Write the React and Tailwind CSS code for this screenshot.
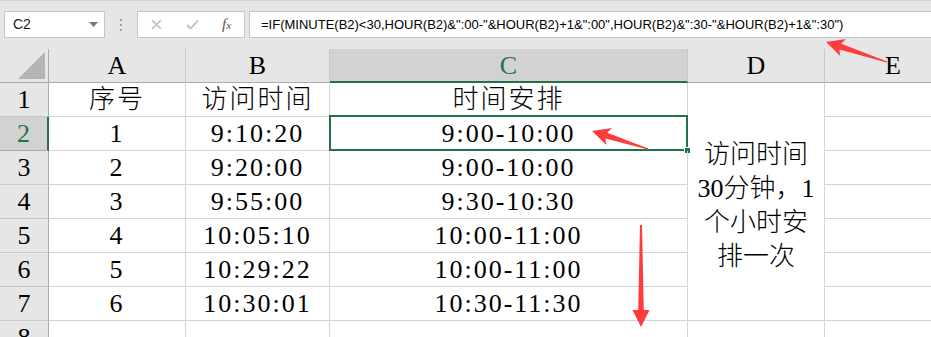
import React from 'react';

const SERIF = { fontFamily: '"Liberation Serif", "Noto Sans CJK SC", serif' };

const rows = [
  { n: 1, a: '序号', b: '访问时间', c: '时间安排' },
  { n: 2, a: '1', b: '9:10:20', c: '9:00-10:00' },
  { n: 3, a: '2', b: '9:20:00', c: '9:00-10:00' },
  { n: 4, a: '3', b: '9:55:00', c: '9:30-10:30' },
  { n: 5, a: '4', b: '10:05:10', c: '10:00-11:00' },
  { n: 6, a: '5', b: '10:29:22', c: '10:00-11:00' },
  { n: 7, a: '6', b: '10:30:01', c: '10:30-11:30' },
  { n: 8, a: '', b: '', c: '' },
];

const formula =
  '=IF(MINUTE(B2)<30,HOUR(B2)&":00-"&HOUR(B2)+1&":00",HOUR(B2)&":30-"&HOUR(B2)+1&":30")';

const cell = 'flex items-center justify-center border-r border-b border-[#d4d4d4] text-[26px] font-light tracking-[2px] text-black leading-none';

const FormulaBar = () => (
  <div className="flex items-start h-[49px] bg-[#e6e6e6] border-t border-[#d2d2d2] pt-[10px] pl-[4px]">
    {/* Name box */}
    <div className="flex items-center justify-between w-[101px] h-[27px] bg-white border border-[#c6c6c6] pl-[8px] pr-[6px]">
      <span className="text-[14px] text-[#222]" style={{ fontFamily: '"Liberation Sans", sans-serif' }}>
        C2
      </span>
      <svg width="9" height="5" viewBox="0 0 9 5">
        <polygon points="0,0 9,0 4.5,5" fill="#7a7a7a" />
      </svg>
    </div>

    {/* Grip dots */}
    <div className="flex flex-col items-center justify-center gap-[3px] w-[32px] h-[27px]">
      <span className="w-[2px] h-[2px] bg-[#a0a0a0]" />
      <span className="w-[2px] h-[2px] bg-[#a0a0a0]" />
      <span className="w-[2px] h-[2px] bg-[#a0a0a0]" />
    </div>

    {/* Cancel / enter / fx */}
    <div className="flex items-center w-[108px] h-[27px] bg-white border border-[#c6c6c6]">
      <svg className="ml-[13px]" width="11" height="11" viewBox="0 0 11 11">
        <path d="M1 1L10 10M10 1L1 10" stroke="#bdbdbd" strokeWidth="1.6" />
      </svg>
      <svg className="ml-[24px]" width="13" height="11" viewBox="0 0 13 11">
        <path d="M1 6L4.5 9.5L12 1.5" stroke="#bdbdbd" strokeWidth="1.8" fill="none" />
      </svg>
      <span
        className="ml-[23px] text-[15px] italic text-[#555] leading-none"
        style={{ fontFamily: '"Liberation Serif", serif' }}
      >
        f<span className="text-[11px]">x</span>
      </span>
    </div>

    {/* Formula input */}
    <div className="flex items-center flex-1 h-[27px] ml-[4px] bg-white border border-[#c6c6c6] border-r-0 pl-[11px]">
      <span className="text-[13px] text-black whitespace-nowrap" style={{ fontFamily: '"Liberation Sans", sans-serif' }}>
        {formula}
      </span>
    </div>
  </div>
);

const headCell = 'flex items-center justify-center bg-[#e6e6e6] border-r border-b border-[#ababab] border-r-[#c8c8c8] text-[26px] leading-none text-black';

const Sheet = () => (
  <div className="grid grid-cols-[49px_137px_144px_358px_137px_137px] auto-rows-[34px]" style={SERIF}>
    {/* Column headers */}
    <div className="relative bg-[#e6e6e6] border-r border-b border-[#ababab]">
      <svg className="absolute right-[3px] bottom-[3px]" width="27" height="27" viewBox="0 0 27 27">
        <polygon points="27,0 27,27 0,27" fill="#b4b4b4" />
      </svg>
    </div>
    <div className={headCell}>A</div>
    <div className={headCell}>B</div>
    <div className="flex items-center justify-center bg-[#d2d2d2] border-r border-r-[#c8c8c8] border-b-2 border-b-[#217346] text-[26px] leading-none text-[#217346] pt-[1px]">
      C
    </div>
    <div className={headCell}>D</div>
    <div className={headCell}>E</div>

    {/* Merged D1:D7 */}
    <div className="col-start-5 row-start-2 row-span-7 flex flex-col items-center justify-center pt-[8px] border-r border-b border-[#d4d4d4] text-[26px] font-light leading-[34px] text-black">
      <span>访问时间</span>
      <span>30分钟，1</span>
      <span>个小时安</span>
      <span>排一次</span>
    </div>

    {rows.map((r) => {
      const active = r.n === 2;
      return (
        <React.Fragment key={r.n}>
          <div
            className={
              active
                ? 'flex items-center justify-center bg-[#d2d2d2] border-r-2 border-r-[#217346] border-b border-b-[#ababab] text-[26px] leading-none text-[#217346]'
                : 'flex items-center justify-center bg-[#e6e6e6] border-r border-b border-[#ababab] border-b-[#c8c8c8] text-[26px] leading-none text-black'
            }
          >
            {r.n}
          </div>
          <div className={cell}>{r.a}</div>
          <div className={cell}>{r.b}</div>
          <div className={`${cell} relative`}>
            {r.c}
            {active && (
              <div className="absolute left-[-1px] top-[-2px] right-[-1px] bottom-[-1px] border-2 border-[#217346]">
                <span className="absolute right-[-5px] bottom-[-5px] w-[7px] h-[7px] bg-[#217346] border border-white" />
              </div>
            )}
          </div>
          {r.n === 8 && <div className={cell} />}
          <div className="border-b border-r border-[#d4d4d4]" />
        </React.Fragment>
      );
    })}
  </div>
);

const Arrows = () => (
  <svg className="absolute left-0 top-0 pointer-events-none" width="931" height="337" viewBox="0 0 931 337">
    <polygon
      points="592,131 611.9,127.9 607.2,132.7 648.2,148.5 647.8,149.5 605.4,138.5 606.3,145.1"
      fill="#ff3b3b"
    />
    <polygon
      points="826,42 845.9,39 841.2,43.8 887.2,61.4 886.8,62.6 839.4,49.5 840.3,56.1"
      fill="#ff3b3b"
    />
    <polygon points="641,327 649.5,310 643.8,310 642,225 640,225 638.2,310 632.5,310" fill="#ff3b3b" />
  </svg>
);

export default function App() {
  return (
    <div className="relative w-[931px] h-[337px] overflow-hidden bg-white">
      <FormulaBar />
      <Sheet />
      <Arrows />
    </div>
  );
}
